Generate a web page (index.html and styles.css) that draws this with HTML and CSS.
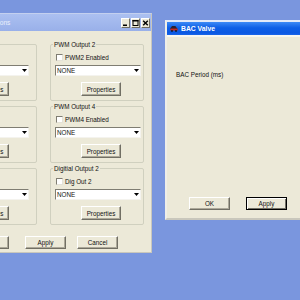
FILE: index.html
```html
<!DOCTYPE html>
<html lang="en">
<head>
    <meta charset="UTF-8">
    <title>Output Options</title>
    <link rel="stylesheet" href="styles.css">
</head>
<body>
    <div class="desktop">
        <div class="window window-options">
            <div class="titlebar inactive">
                <span class="title">Output Options</span>
                <div class="controls">
                    <span class="ctl"><svg width="7" height="8" viewBox="0 0 7 8"><rect x="1" y="5.5" width="4" height="1.5" fill="#000"/></svg></span>
                    <span class="ctl"><svg width="7" height="8" viewBox="0 0 7 8"><rect x="1" y="1.5" width="5" height="5" fill="none" stroke="#000" stroke-width="1"/><rect x="0.5" y="1" width="6" height="1.5" fill="#000"/></svg></span>
                    <span class="ctl"><svg width="7" height="8" viewBox="0 0 7 8"><path d="M1.2 1.7 L5.8 6.3 M5.8 1.7 L1.2 6.3" stroke="#000" stroke-width="1.4"/></svg></span>
                </div>
            </div>
            <div class="window-body">
                <div class="groups">
                    <fieldset class="group">
                        <legend>PWM Output 1</legend>
                        <label class="check"><span class="box"></span>PWM1 Enabled</label>
                        <div class="select"><span>NONE</span><span class="arrow"><svg width="5" height="3" viewBox="0 0 5 3"><path d="M0 0 H5 L2.5 3 Z" fill="#000"/></svg></span></div>
                        <button class="btn btn-props">Properties</button>
                    </fieldset>
                    <fieldset class="group">
                        <legend>PWM Output 2</legend>
                        <label class="check"><span class="box"></span>PWM2 Enabled</label>
                        <div class="select"><span>NONE</span><span class="arrow"><svg width="5" height="3" viewBox="0 0 5 3"><path d="M0 0 H5 L2.5 3 Z" fill="#000"/></svg></span></div>
                        <button class="btn btn-props">Properties</button>
                    </fieldset>
                    <fieldset class="group">
                        <legend>PWM Output 3</legend>
                        <label class="check"><span class="box"></span>PWM3 Enabled</label>
                        <div class="select"><span>NONE</span><span class="arrow"><svg width="5" height="3" viewBox="0 0 5 3"><path d="M0 0 H5 L2.5 3 Z" fill="#000"/></svg></span></div>
                        <button class="btn btn-props">Properties</button>
                    </fieldset>
                    <fieldset class="group">
                        <legend>PWM Output 4</legend>
                        <label class="check"><span class="box"></span>PWM4 Enabled</label>
                        <div class="select"><span>NONE</span><span class="arrow"><svg width="5" height="3" viewBox="0 0 5 3"><path d="M0 0 H5 L2.5 3 Z" fill="#000"/></svg></span></div>
                        <button class="btn btn-props">Properties</button>
                    </fieldset>
                    <fieldset class="group">
                        <legend>Digitial Output 1</legend>
                        <label class="check"><span class="box"></span>Dig Out 1</label>
                        <div class="select"><span>NONE</span><span class="arrow"><svg width="5" height="3" viewBox="0 0 5 3"><path d="M0 0 H5 L2.5 3 Z" fill="#000"/></svg></span></div>
                        <button class="btn btn-props">Properties</button>
                    </fieldset>
                    <fieldset class="group">
                        <legend>Digitial Output 2</legend>
                        <label class="check"><span class="box"></span>Dig Out 2</label>
                        <div class="select"><span>NONE</span><span class="arrow"><svg width="5" height="3" viewBox="0 0 5 3"><path d="M0 0 H5 L2.5 3 Z" fill="#000"/></svg></span></div>
                        <button class="btn btn-props">Properties</button>
                    </fieldset>
                </div>
                <div class="dialog-buttons">
                    <button class="btn btn-ok">OK</button>
                    <button class="btn">Apply</button>
                    <button class="btn">Cancel</button>
                </div>
            </div>
        </div>

        <div class="window window-bac">
            <div class="titlebar active">
                <svg class="app-icon" width="8" height="7" viewBox="0 0 8 7">
                    <path d="M2 1 L5.4 1 L7 3.2 L7.6 4.6 L0.4 4.6 L0.4 3.2 Z" fill="#2b2233"/>
                    <path d="M0.4 3.6 H7.6 V5.6 H0.4 Z" fill="#c42a22"/>
                    <circle cx="2" cy="5.9" r="0.9" fill="#111"/>
                    <circle cx="6" cy="5.9" r="0.9" fill="#111"/>
                </svg>
                <span class="title">BAC Valve</span>
            </div>
            <div class="bac-body">
                <div class="field-label">BAC Period (ms)</div>
                <div class="bac-buttons">
                    <button class="btn">OK</button>
                    <button class="btn btn-default">Apply</button>
                </div>
            </div>
        </div>
    </div>
</body>
</html>
```

FILE: styles.css
```css
body {
    margin: 0;
    background: #7a96de;
    font-family: 'Liberation Sans', Arial, sans-serif;
    font-size: 6.3px;
    color: #111;
}

.desktop {
    position: relative;
    width: 300px;
    height: 300px;
    overflow: hidden;
}

/* windows sit on the desktop at their own spot */
.window {
    position: absolute;
    display: flex;
    flex-direction: column;
    box-sizing: border-box;
    background: #ece9d8;
}

.window-options {
    left: -75px;
    top: 13px;
    width: 227px;
    height: 240px;
    border: 1px solid #c3d0ef;
    border-right-color: #c9c7bc;
    border-bottom-color: #c9c7bc;
}

.window-bac {
    left: 165px;
    top: 20px;
    width: 150px;
    height: 200px;
    border: 2px solid;
    border-color: #e4eaf8 #c9c7bc #c9c7bc #efeee8;
}

.titlebar {
    display: flex;
    flex: none;
    box-sizing: border-box;
}

.titlebar.inactive {
    height: 17px;
    align-items: flex-start;
    padding: 4px 1px 0 40px;
    background: linear-gradient(#abc0f1, #99b0e9);
    color: #e9eefb;
}

.titlebar.inactive .title {
    flex: 1;
    font-size: 6.6px;
    line-height: 10px;
}

.controls {
    display: flex;
    gap: 1px;
}

.ctl {
    display: flex;
    width: 9px;
    height: 10px;
    box-sizing: border-box;
    background: #ece9d8;
    border: 1px solid;
    border-color: #fff #716f64 #716f64 #fff;
}

.titlebar.active {
    height: 13px;
    align-items: center;
    gap: 3px;
    padding-left: 3px;
    background: linear-gradient(#3d8af6, #0e5fe6 45%, #0a58e2 85%, #1b66ea);
    color: #fff;
}

.titlebar.active .title {
    font-size: 6.8px;
    font-weight: bold;
}

.window-options .window-body {
    flex: 1;
    display: flex;
    flex-direction: column;
    padding: 10px 7px 3px;
}

.groups {
    display: grid;
    grid-template-columns: 99px 94px;
    column-gap: 13px;
    row-gap: 2px;
    justify-content: end;
}

.group {
    margin: 0;
    padding: 0 4px 4px;
    min-width: 0;
    border: 1px solid #d0d0bf;
    border-radius: 2px;
}

.group legend {
    margin-left: -2px;
    padding: 0 1px;
    line-height: 7px;
}

.check {
    display: flex;
    align-items: center;
    gap: 2px;
    height: 7px;
    margin: 6px 0 0 1px;
}

.box {
    width: 7px;
    height: 7px;
    box-sizing: border-box;
    background: #fff;
    border: 1px solid;
    border-color: #7f7d72 #e4e2d8 #e4e2d8 #7f7d72;
}

.select {
    display: flex;
    align-items: center;
    width: 86px;
    height: 11px;
    margin-top: 4px;
    padding-left: 1px;
    box-sizing: border-box;
    background: #fff;
    border: 1px solid;
    border-color: #7f7d72 #f4f3ee #f4f3ee #7f7d72;
}

.select .arrow {
    display: flex;
    align-items: center;
    justify-content: center;
    width: 7px;
    margin-left: auto;
}

.btn {
    display: block;
    width: 41px;
    height: 13px;
    padding: 0;
    box-sizing: border-box;
    background: #ece9d8;
    border: 1px solid;
    border-color: #fff #716f64 #716f64 #fff;
    box-shadow: inset -1px -1px #aca899;
    font-family: inherit;
    font-size: 6.3px;
    color: #111;
}

.btn-props {
    width: 40px;
    height: 14px;
    margin: 6px 0 0 26px;
}

.dialog-buttons {
    display: flex;
    justify-content: flex-end;
    gap: 11px;
    margin-top: 11px;
    padding-right: 26px;
}

.btn-ok {
    margin-right: 5px;
}

.bac-body {
    flex: 1;
    display: flex;
    flex-direction: column;
    padding: 34px 9px 8px;
    border-top: 2px solid #f7f6f0;
}

.field-label {
    line-height: 7px;
}

.bac-buttons {
    display: flex;
    gap: 16px;
    margin-top: auto;
    padding-left: 13px;
}

.btn-default {
    border-color: #000;
    box-shadow: inset 1px 1px #fff, inset -1px -1px #716f64;
}
```
